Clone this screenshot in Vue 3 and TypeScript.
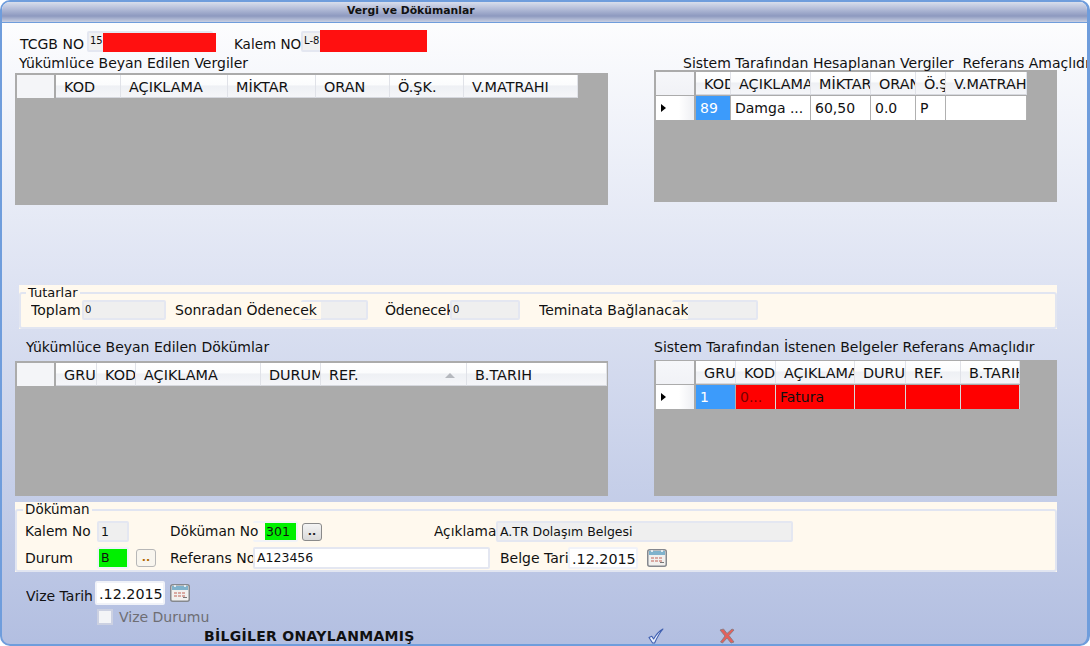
<template>
  <div class="window">
    <div class="titlebar">Vergi ve Dökümanlar</div>

    <div class="content">
      <div class="id-row">
        <span class="lbl-tcgb">TCGB NO</span>
        <div class="field field-tiny tcgb">15<i class="redact redact-a"></i></div>
        <span class="lbl-kalem">Kalem NO</span>
        <div class="field field-tiny kalem">L-8<i class="redact redact-b"></i></div>
      </div>

      <div class="split split-top">
        <div>
          <div class="caption cap-left">Yükümlüce Beyan Edilen Vergiler</div>
          <div class="grid grid-a">
            <div class="grid-head">
              <div class="corner" style="width: 39px"></div>
              <div v-for="c in declaredTaxCols" :key="c.title" class="hcell" :style="{ width: c.width + 'px' }">{{ c.title }}</div>
            </div>
          </div>
        </div>
        <div>
          <div class="caption cap-sys">Sistem Tarafından Hesaplanan Vergiler&nbsp; Referans Amaçlıdır</div>
          <div class="grid grid-b">
            <div class="grid-head">
              <div class="corner" style="width: 40px"></div>
              <div v-for="c in systemTaxCols" :key="c.title" class="hcell" :style="{ width: c.width + 'px' }">{{ c.title }}</div>
            </div>
            <div class="grid-row">
              <div class="corner marker" style="width: 40px"><b class="arrow"></b></div>
              <div v-for="(c, i) in systemTaxCols" :key="c.title" class="cell" :class="{ picked: i === 0 }" :style="{ width: c.width + 'px' }">{{ systemTaxRow[i] }}</div>
            </div>
          </div>
        </div>
      </div>

      <div class="panel panel-sum">
        <fieldset>
          <legend>Tutarlar</legend>
          <div class="sum-row">
            <span class="l" style="width: 51px">Toplam</span>
            <div class="field field-tiny off" style="width: 84px">0</div>
            <span class="l over" style="width: 146px; margin-left: 9px">Sonradan Ödenecek</span>
            <div class="field off" style="width: 67px; margin-left: -20px"></div>
            <span class="l tight" style="width: 65px; margin-left: 17px">Ödenecek</span>
            <div class="field field-tiny off" style="width: 70px">0</div>
            <span class="l over" style="width: 149px; margin-left: 19px">Teminata Bağlanacak</span>
            <div class="field off" style="width: 86px; margin-left: -16px"></div>
          </div>
        </fieldset>
      </div>

      <div class="split split-docs">
        <div>
          <div class="caption cap-doc-left">Yükümlüce Beyan Edilen Dökümlar</div>
          <div class="grid grid-c">
            <div class="grid-head">
              <div class="corner" style="width: 39px"></div>
              <div v-for="c in declaredDocCols" :key="c.title" class="hcell" :class="{ sorted: c.title === 'REF.' }" :style="{ width: c.width + 'px' }">{{ c.title }}</div>
            </div>
          </div>
        </div>
        <div>
          <div class="caption cap-doc-right">Sistem Tarafından İstenen Belgeler Referans Amaçlıdır</div>
          <div class="grid grid-d">
            <div class="grid-head">
              <div class="corner" style="width: 40px"></div>
              <div v-for="c in systemDocCols" :key="c.title" class="hcell" :style="{ width: c.width + 'px' }">{{ c.title }}</div>
            </div>
            <div class="grid-row">
              <div class="corner marker" style="width: 40px"><b class="arrow"></b></div>
              <div v-for="(c, i) in systemDocCols" :key="c.title" class="cell" :class="i === 0 ? 'picked' : 'alert'" :style="{ width: c.width + 'px' }">
                <span :class="{ dim: i === 1 }">{{ systemDocRow[i] }}</span>
              </div>
            </div>
          </div>
        </div>
      </div>

      <div class="panel panel-doc">
        <fieldset>
          <legend>Döküman</legend>
          <div class="doc-row">
            <span class="l" style="width: 72px">Kalem No</span>
            <div class="field field-sm off" style="width: 32px">1</div>
            <span class="l over" style="width: 95px; margin-left: 41px">Döküman No</span>
            <div class="field field-sm green doc-no" style="width: 45px; margin-left: -12px">301</div>
            <button class="dots" style="margin-left: 4px">..</button>
            <span class="l" style="width: 62px; margin-left: 112px">Açıklama</span>
            <div class="field field-sm off" style="width: 297px">A.TR Dolaşım Belgesi</div>
          </div>
          <div class="doc-row second">
            <span class="l" style="width: 72px">Durum</span>
            <div class="field field-sm green" style="width: 32px">B</div>
            <button class="dots amber" style="margin-left: 7px">..</button>
            <span class="l" style="width: 83px; margin-left: 14px">Referans No</span>
            <div class="field field-sm plain" style="width: 237px">A123456</div>
            <span class="l" style="width: 68px; margin-left: 10px">Belge Tarih</span>
            <div class="field date" style="width: 70px">.12.2015</div>
            <svg class="cal" style="margin-left: 9px" viewBox="0 0 20 18" width="20" height="18">
              <use href="#cal-icon" />
            </svg>
          </div>
        </fieldset>
      </div>

      <div class="visa-row">
        <span class="l visa-label" style="width: 69px">Vize Tarih</span>
        <div class="field date" style="width: 70px">.12.2015</div>
        <svg class="cal" style="margin-left: 5px" viewBox="0 0 20 18" width="20" height="18">
          <defs>
            <g id="cal-icon">
              <rect x="0.75" y="0.75" width="18.5" height="16.5" rx="2" fill="#f1f0ee" stroke="#85888e" stroke-width="1.5" />
              <rect x="2" y="2" width="16" height="4" fill="#7fb2cc" />
              <rect x="4" y="1" width="2" height="2" fill="#dfe8ee" />
              <rect x="14" y="1" width="2" height="2" fill="#dfe8ee" />
              <g fill="#d9a9a2">
                <rect x="4" y="8" width="3" height="2" />
                <rect x="8" y="8" width="3" height="2" />
                <rect x="12" y="8" width="3" height="2" />
                <rect x="4" y="11" width="3" height="2" />
                <rect x="8" y="11" width="3" height="2" />
                <rect x="12" y="11" width="3" height="2" />
              </g>
              <rect x="13" y="13" width="4" height="1" fill="#777" />
            </g>
          </defs>
          <use href="#cal-icon" />
        </svg>
      </div>

      <label class="visa-check">
        <input type="checkbox" disabled />
        <span>Vize Durumu</span>
      </label>

      <div class="footer">
        <strong>BİLGİLER ONAYLANMAMIŞ</strong>
        <svg class="ok" viewBox="0 0 16 16" width="16" height="16">
          <path d="M1 9.5 L3.8 8.2 L5.6 11 C7.8 7 11 3.2 15 1 C11.5 5 9 9.5 6.6 15 L4.6 15 Z" fill="#e8eefc" stroke="#3f5fb0" stroke-width="1.1" stroke-linejoin="round" />
        </svg>
        <svg class="no" viewBox="0 0 16 16" width="16" height="16">
          <path d="M1 2 L4.5 1 L8 5.5 L13 1 L15 2 L10 7.5 L15 14 L12 15 L8 10 L3.5 15 L1.5 14 L6 8 Z" fill="#e4605c" stroke="#8b7b80" stroke-width="0.9" stroke-linejoin="round" />
        </svg>
      </div>
    </div>
  </div>
</template>

<script setup lang="ts">
interface Col {
  title: string
  width: number
}

const declaredTaxCols: Col[] = [
  { title: 'KOD', width: 65 },
  { title: 'AÇIKLAMA', width: 107 },
  { title: 'MİKTAR', width: 88 },
  { title: 'ORAN', width: 74 },
  { title: 'Ö.ŞK.', width: 74 },
  { title: 'V.MATRAHI', width: 114 }
]

const systemTaxCols: Col[] = [
  { title: 'KOD', width: 35 },
  { title: 'AÇIKLAMA', width: 80 },
  { title: 'MİKTAR', width: 60 },
  { title: 'ORAN', width: 45 },
  { title: 'Ö.ŞK', width: 30 },
  { title: 'V.MATRAH', width: 81 }
]

const systemTaxRow = ['89', 'Damga ...', '60,50', '0.0', 'P', '']

const declaredDocCols: Col[] = [
  { title: 'GRU', width: 41 },
  { title: 'KOD', width: 39 },
  { title: 'AÇIKLAMA', width: 125 },
  { title: 'DURUM', width: 60 },
  { title: 'REF.', width: 146 },
  { title: 'B.TARIH', width: 140 }
]

const systemDocCols: Col[] = [
  { title: 'GRU', width: 40 },
  { title: 'KOD', width: 40 },
  { title: 'AÇIKLAMA', width: 79 },
  { title: 'DURUM', width: 51 },
  { title: 'REF.', width: 55 },
  { title: 'B.TARIH', width: 59 }
]

const systemDocRow = ['1', '0...', 'Fatura', '', '', '']
</script>

<style>
html,
body {
  margin: 0;
  overflow: hidden;
  background: #fff;
}
</style>

<style scoped>
.window {
  box-sizing: border-box;
  width: 1090px;
  height: 646px;
  overflow: hidden;
  display: flex;
  flex-direction: column;
  border: 2px solid #6f9ddc;
  border-right-width: 3px;
  border-radius: 10px;
  background: linear-gradient(#ffffff 0, #dfe4f3 270px, #b3bfe1 640px);
  font-family: "DejaVu Sans", Verdana, sans-serif;
  font-size: 14px;
  color: #111;
}

.titlebar {
  box-sizing: border-box;
  flex: none;
  height: 21px;
  padding: 2px 0 0 345px;
  border-bottom: 1px solid #6f9ddc;
  background: linear-gradient(#d8deec 0, #b3bcd8 35%, #8d99bf 70%, #c9d0e3 100%);
  font-size: 10.8px;
  font-weight: bold;
  line-height: 14px;
}

.content {
  flex: 1;
  padding-left: 13px;
}

.id-row {
  display: flex;
  align-items: flex-end;
  height: 21px;
  margin-top: 8px;
}

.lbl-tcgb {
  flex: none;
  width: 67px;
  margin-left: 5px;
  line-height: 16px;
  white-space: nowrap;
}

.lbl-kalem {
  flex: none;
  width: 67px;
  margin-left: 21px;
  font-size: 13.5px;
  line-height: 16px;
  white-space: nowrap;
}

.tcgb {
  width: 126px;
}

.kalem {
  width: 126px;
}

.redact {
  position: absolute;
  background: #ff1010;
}

.redact-a {
  left: 14px;
  top: 0;
  width: 113px;
  height: 19px;
}

.redact-b {
  left: 17px;
  top: -3px;
  width: 107px;
  height: 22px;
}

.split {
  display: grid;
  grid-template-columns: 593px 403px;
  column-gap: 46px;
}

.split-top {
  margin-top: 2px;
}

.split-docs {
  margin-top: 9px;
}

.caption {
  line-height: 18px;
  white-space: nowrap;
}

.cap-left {
  height: 19px;
  padding-left: 4px;
}

.cap-sys {
  height: 16px;
  padding-left: 29px;
}

.cap-doc-left {
  height: 23px;
  padding-left: 11px;
}

.cap-doc-right {
  height: 22px;
}

.grid {
  box-sizing: border-box;
  padding: 2px 0 0 2px;
  background: #ababab;
  overflow: hidden;
}

.grid-a {
  height: 132px;
}

.grid-b {
  height: 132px;
}

.grid-c {
  height: 135px;
}

.grid-d {
  height: 136px;
  padding-top: 1px;
}

.grid-head,
.grid-row {
  display: flex;
}

.corner {
  box-sizing: border-box;
  flex: none;
  background: linear-gradient(#f6f7fa, #f1f2f6);
  border-right: 2px solid #a9a9a9;
}

.grid-a .corner,
.grid-c .corner {
  background: #f4f5f8;
}

.hcell {
  box-sizing: border-box;
  flex: none;
  height: 23px;
  padding: 1px 0 0 8px;
  overflow: hidden;
  white-space: nowrap;
  border-right: 1px solid #e0e2e8;
  border-bottom: 1px solid #d6d8de;
  background: linear-gradient(#ffffff 0, #fbfcfd 45%, #eef0f4 50%, #f5f6f9 100%);
  line-height: 23px;
  font-size: 14.4px;
}

.sorted {
  position: relative;
}

.sorted::after {
  content: "";
  position: absolute;
  right: 11px;
  top: 10px;
  border: 4px solid transparent;
  border-top-width: 0;
  border-left-width: 5px;
  border-right-width: 5px;
  border-bottom: 5px solid #b5b8be;
}

.grid-row {
  height: 24px;
  margin-top: 1px;
}

.marker {
  display: flex;
  align-items: center;
  padding-left: 5px;
  background: linear-gradient(90deg, #fff 0, #fff 60%, #eeeff3 100%);
}

.arrow {
  width: 0;
  height: 0;
  border-top: 4px solid transparent;
  border-bottom: 4px solid transparent;
  border-left: 5px solid #000;
}

.cell {
  box-sizing: border-box;
  flex: none;
  padding: 1px 0 0 4px;
  overflow: hidden;
  white-space: nowrap;
  background: #fff;
  border-right: 1px solid #b0b0b0;
  line-height: 23px;
  font-size: 14px;
}

.picked {
  background: #3c9bfb;
  color: #fff;
}

.alert {
  background: #ff0000;
  border-right-color: #d9d9d9;
}

.dim {
  color: #7a0000;
}

.panel {
  box-sizing: border-box;
  background: #fff9ee;
}

.panel fieldset {
  box-sizing: border-box;
  height: 100%;
  margin: 0;
  min-width: 0;
  border: 2px solid #e1e5f1;
  border-radius: 3px;
}

.panel legend {
  padding: 0 2px;
  font-size: 13px;
  line-height: 15px;
}

.panel-sum {
  width: 1038px;
  height: 44px;
  margin: 80px 0 0 4px;
}

.panel-sum fieldset {
  padding: 0 0 0 10px;
}

.panel-sum legend {
  margin-left: -5px;
}

.sum-row {
  display: flex;
  align-items: center;
  height: 20px;
}

.panel-doc {
  width: 1042px;
  height: 70px;
  margin-top: 6px;
}

.panel-doc fieldset {
  padding: 0 0 0 8px;
}

.panel-doc legend {
  margin-left: -2px;
  font-size: 13.5px;
}

.doc-row {
  display: flex;
  align-items: center;
  height: 21px;
  margin-top: 4px;
  font-size: 13.7px;
}

.doc-row.second {
  height: 22px;
  margin-top: 5px;
  font-size: 14px;
}

.l {
  flex: none;
  overflow: hidden;
  white-space: nowrap;
  line-height: 17px;
}

.tight {
  letter-spacing: -0.15px;
}

.over {
  position: relative;
  z-index: 1;
  background: #fff9ee;
}

.field {
  position: relative;
  box-sizing: border-box;
  flex: none;
  height: 100%;
  border: 2px solid #e4e7f1;
  border-radius: 2px;
  background: #f1f1f1;
  white-space: nowrap;
}

.field-tiny {
  padding-left: 1px;
  font-size: 10px;
  line-height: 16px;
}

.field-sm {
  padding-left: 2px;
  font-size: 12.5px;
  line-height: 17px;
}

.off {
  background: #efefef;
}

.green {
  background: #00f000;
  border-color: #f1f3f8;
}

.doc-no {
  padding-left: 11px;
}

.plain {
  background: #fff;
}

.date {
  padding-left: 2px;
  background: #fff;
  border-color: #f0f2f8;
  font-size: 14.3px;
  line-height: 20px;
  overflow: hidden;
}

.dots {
  box-sizing: border-box;
  flex: none;
  width: 20px;
  height: 18px;
  padding: 0;
  border: 1px solid #8a8a8a;
  border-radius: 3px;
  background: linear-gradient(#f4f4f4, #d9d9d9);
  color: #222;
  font: bold 11px/14px "DejaVu Sans", sans-serif;
}

.dots.amber {
  border-color: #b7b7b7;
  background: #f8f5ee;
  color: #b36a00;
}

.cal {
  flex: none;
}

.visa-row {
  display: flex;
  align-items: center;
  height: 24px;
  margin-top: 9px;
  padding-left: 11px;
}

.visa-row .date {
  line-height: 22px;
}

.visa-label {
  margin-top: 6px;
}

.visa-check {
  display: flex;
  align-items: center;
  height: 16px;
  margin: 4px 0 0 82px;
  color: #6e6e73;
}

.visa-check input {
  appearance: none;
  box-sizing: border-box;
  width: 16px;
  height: 16px;
  margin: 0 6px 0 0;
  border: 2px solid #ccd1e2;
  background: #f3f4f7;
}

.footer {
  display: flex;
  align-items: center;
  height: 16px;
  margin-top: 3px;
  padding-left: 189px;
}

.footer strong {
  width: 444px;
  font-size: 14px;
  letter-spacing: 0.3px;
  white-space: nowrap;
}

.no {
  margin-left: 55px;
}
</style>
